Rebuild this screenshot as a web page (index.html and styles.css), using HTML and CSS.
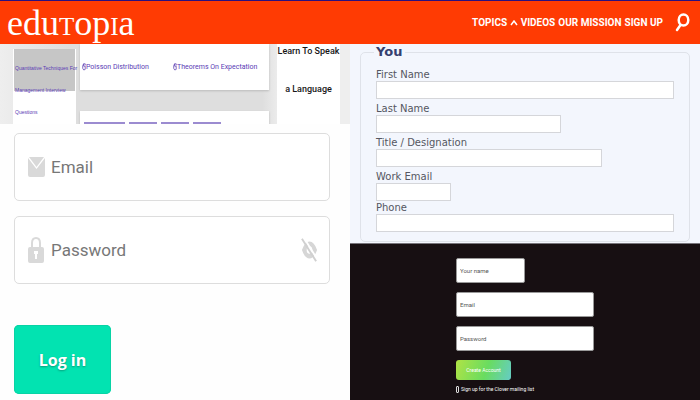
FILE: index.html
```html
<!DOCTYPE html>
<html lang="en">
<head>
<meta charset="utf-8">
<meta name="viewport" content="width=device-width, initial-scale=1">
<title>Edutopia</title>
<link rel="stylesheet" href="styles.css">
</head>
<body>
<header class="topbar">
  <a class="logo" href="#">edu<span class="small-cap">t</span>op<span class="small-cap">i</span>a</a>
  <nav class="nav">
    <a href="#">TOPICS <svg class="caret" viewBox="0 0 8 6" aria-hidden="true"><path d="M1 5 4 1 7 5"/></svg></a>
    <a href="#">VIDEOS</a>
    <a href="#">OUR MISSION</a>
    <a href="#">SIGN UP</a>
  </nav>
  <button class="search" type="button" aria-label="Search">
    <svg viewBox="0 0 15 19" aria-hidden="true"><ellipse cx="8.500" cy="7" rx="4.800" ry="5.500"/><path d="M5.500 12 2 17"/></svg>
  </button>
</header>
<main class="columns">
  <div class="column">
    <section class="topics">
      <aside class="side-card"><a href="#">Quantitative Techniques For<br>Management Interview<br>Questions</a></aside>
      <div class="topic-cards">
        <div class="topic-card topic-links">
          <a href="#"><svg class="hand" viewBox="0 0 5 10" aria-hidden="true"><path d="M2 1Q0 4 1 7T4 8V4H2V1H4V3"/></svg>Poisson Distribution</a>
          <a href="#"><svg class="hand" viewBox="0 0 5 10" aria-hidden="true"><path d="M2 1Q0 4 1 7T4 8V4H2V1H4V3"/></svg>Theorems On Expectation</a>
        </div>
        <div class="topic-card tabs"><i class="tab tab-wide"></i><i class="tab"></i><i class="tab"></i><i class="tab"></i></div>
      </div>
      <aside class="promo">Learn To Speak<br>a Language</aside>
    </section>
    <form class="login">
      <div class="login-field">
        <svg class="field-icon" viewBox="0 0 17 20" aria-hidden="true"><path d="M1 0H16L8.500 10Z"/><path d="M0 1 8.500 12 17 1V18Q17 20 15 20H2Q0 20 0 18Z"/></svg>
        <input type="email" aria-label="Email" placeholder="Email">
      </div>
      <div class="login-field">
        <svg class="field-icon lock" viewBox="0 0 17 28" aria-hidden="true"><path fill-rule="evenodd" d="M3 11V7Q3 1 8 1T13 7V11H14Q16 11 16 13V25Q16 27 14 27H2Q0 27 0 25V13Q0 11 2 11ZM5 11H11V7Q11 3 8 3T5 7ZM6 15V18H7V23H9V18H10V15Z"/></svg>
        <input type="password" aria-label="Password" placeholder="Password">
        <button class="reveal" type="button" aria-label="Show password">
          <svg viewBox="0 0 18 26" aria-hidden="true"><path class="eye" fill-rule="evenodd" d="M1 13Q4 4 9 4T17 13Q14 22 9 22T1 13ZM6 13Q6 17 9 17T12 13 9 9 6 13Z"/><path class="gap" d="M3 0 18 24"/><path class="slash" d="M1 1 16 25"/></svg>
        </button>
      </div>
      <button class="login-button" type="submit">Log in</button>
    </form>
  </div>
  <div class="column">
    <form class="contact">
      <fieldset>
        <legend>You</legend>
        <label for="first">First Name</label><input id="first" type="text">
        <label for="last">Last Name</label><input class="w-last" id="last" type="text">
        <label for="job">Title / Designation</label><input class="w-job" id="job" type="text">
        <label for="work">Work Email</label><input class="w-work" id="work" type="email">
        <label class="tight" for="phone">Phone</label><input id="phone" type="tel">
      </fieldset>
    </form>
    <form class="signup">
      <div class="signup-body">
        <input class="signup-input half" type="text" aria-label="Your name" placeholder="Your name">
        <input class="signup-input" type="email" aria-label="Email" placeholder="Email">
        <input class="signup-input" type="password" aria-label="Password" placeholder="Password">
        <button class="create" type="submit">Create Account</button>
        <label class="mailing"><input type="checkbox">Sign up for the Clover mailing list</label>
      </div>
    </form>
  </div>
</main>
</body>
</html>
```
FILE: styles.css
```css
* { box-sizing: border-box; }
body {
  margin: 0;
  min-height: 100vh;
  display: flex;
  flex-direction: column;
  background: #fefefe;
  font-family: Roboto, sans-serif;
}
a { color: inherit; text-decoration: none; }
button { font: inherit; border: 0; padding: 0; cursor: pointer; }
input { font: inherit; min-width: 0; }

.topbar {
  display: flex;
  align-items: center;
  height: 44px;
  padding: 0 10px 0 7px;
  border-top: 1px solid #2a1080;
  background: #ff3b03;
  color: #fff;
}
.logo {
  margin-right: auto;
  font-family: "Liberation Serif", serif;
  font-size: 36px;
  line-height: 40px;
}
.small-cap { font-variant: small-caps; }
.nav {
  display: flex;
  gap: 3px;
  font-size: 10px;
  font-weight: 700;
  white-space: nowrap;
}
.caret { width: 8px; height: 6px; fill: none; stroke: #fff; stroke-width: 1.500; }
.search { margin-left: 12px; background: none; display: flex; }
.search svg { width: 15px; height: 19px; fill: none; stroke: #fff; stroke-width: 2.500; stroke-linecap: round; }

.columns { flex: 1; display: grid; grid-template-columns: 1fr 1fr; }
.column { display: flex; flex-direction: column; min-width: 0; }

.topics {
  display: grid;
  grid-template-columns: 63px minmax(0, 1fr) 63px;
  gap: 4px;
  height: 80px;
  padding: 0 10px 0 13px;
  overflow: hidden;
  background: linear-gradient(90deg, #eee, #dedede 20%, #dedede 75%, #eee 80%);
  color: #5a3cb5;
}
.side-card {
  margin-top: 5px;
  padding: 8px 1px;
  border: solid #fff;
  border-width: 0 1px;
  background: linear-gradient(#c6c6c6 42px, #fff 42px);
  font-family: "Liberation Sans", sans-serif;
  font-size: 5px;
  line-height: 22px;
  white-space: nowrap;
}
.topic-cards { display: flex; flex-direction: column; gap: 21px; margin-right: 4px; }
.topic-card { background: #fff; box-shadow: 0 1px 2px #bbb; }
.topic-links {
  display: grid;
  grid-template-columns: 91px 1fr;
  height: 46px;
  padding: 14px 2px;
  font-size: 7px;
  line-height: 16px;
  white-space: nowrap;
}
.topic-links a { display: flex; align-items: center; }
.hand { width: 4px; height: 10px; fill: none; stroke: #6548b5; stroke-width: 1; }
.tabs { flex: 1; display: flex; gap: 4px; padding: 11px 4px 0; }
.tab { width: 28px; height: 2px; background: #9b8bd0; }
.tab-wide { width: 41px; }
.promo {
  background: #fff;
  color: #171717;
  font-size: 9px;
  font-weight: 500;
  line-height: 38px;
  margin-top: -12px;
  text-align: center;
  white-space: nowrap;
}

.login { display: flex; flex-direction: column; gap: 15px; padding: 9px 20px 7px 14px; }
.login-field {
  display: flex;
  align-items: center;
  gap: 6px;
  height: 68px;
  padding: 0 11px 0 13px;
  border: 1px solid #ddd;
  border-radius: 5px;
  background: #fff;
}
.login-field input {
  flex: 1;
  border: 0;
  padding: 0;
  outline: 0;
  font-size: 17px;
}
.login-field input::placeholder { color: #777; opacity: 1; }
.field-icon { width: 17px; height: 20px; fill: #d9d9d9; }
.lock { height: 28px; }
.reveal { background: none; display: flex; }
.reveal svg { width: 17px; height: 26px; }
.eye { fill: #d6d6d6; }
.gap { stroke: #fff; stroke-width: 2; }
.slash { stroke: #d0d0d0; stroke-width: 2; }
.login-button {
  align-self: flex-start;
  width: 97px;
  height: 69px;
  margin-top: 26px;
  border-radius: 5px;
  background: #02e3b1;
  box-shadow: inset 0 0 0 1px #08d3a5;
  color: #fff;
  font-family: "Open Sans", sans-serif;
  font-size: 16px;
  font-weight: 700;
  text-shadow: 0 1px 2px #079b79;
}

.contact { padding: 0 10px 1px; background: #f3f6fd; }
.contact fieldset {
  display: flex;
  flex-direction: column;
  min-width: 0;
  margin: 0;
  padding: 5px 15px 9px;
  border: 1px solid #dfe2e9;
  border-radius: 5px;
}
.contact legend {
  padding: 0 3px 0 2px;
  margin-left: -2px;
  color: #35406f;
  font-family: "DejaVu Sans", sans-serif;
  font-size: 13px;
  font-weight: 700;
  line-height: 16px;
}
.contact label {
  margin-top: 4px;
  color: #555761;
  font-family: "DejaVu Sans", sans-serif;
  font-size: 10px;
  line-height: 12px;
}
.contact .tight { margin-top: 1px; }
.contact input {
  width: 100%;
  height: 18px;
  border: 1px solid #d5d6da;
  background: #fff;
}
.contact .w-last { width: 62%; }
.contact .w-job { width: 76%; }
.contact .w-work { width: 25%; }

.signup {
  flex: 1;
  padding: 14px 0 4px;
  border-top: 1px solid #77747b;
  background: #170f12;
}
.signup-body {
  display: flex;
  flex-direction: column;
  align-items: flex-start;
  width: 138px;
  margin: 0 auto;
}
.signup-input {
  width: 100%;
  height: 25px;
  margin-bottom: 9px;
  padding: 0 3px;
  border: 1px solid #999;
  border-radius: 2px;
  background: #fff;
  font-size: 6px;
}
.signup-input::placeholder { color: #555; opacity: 1; }
.half { width: 50%; }
.create {
  width: 55px;
  height: 20px;
  border-radius: 3px;
  background: linear-gradient(110deg, #b0e345, #69dc60 55%, #65ccc5);
  color: #fff;
  font-size: 5px;
}
.mailing {
  display: flex;
  align-items: center;
  gap: 2px;
  margin-top: 4px;
  color: #fff;
  font-size: 5px;
  line-height: 10px;
  white-space: nowrap;
}
.mailing input { appearance: none; width: 3px; height: 7px; margin: 0; border: 1px solid #ddd; border-radius: 1px; }
```
